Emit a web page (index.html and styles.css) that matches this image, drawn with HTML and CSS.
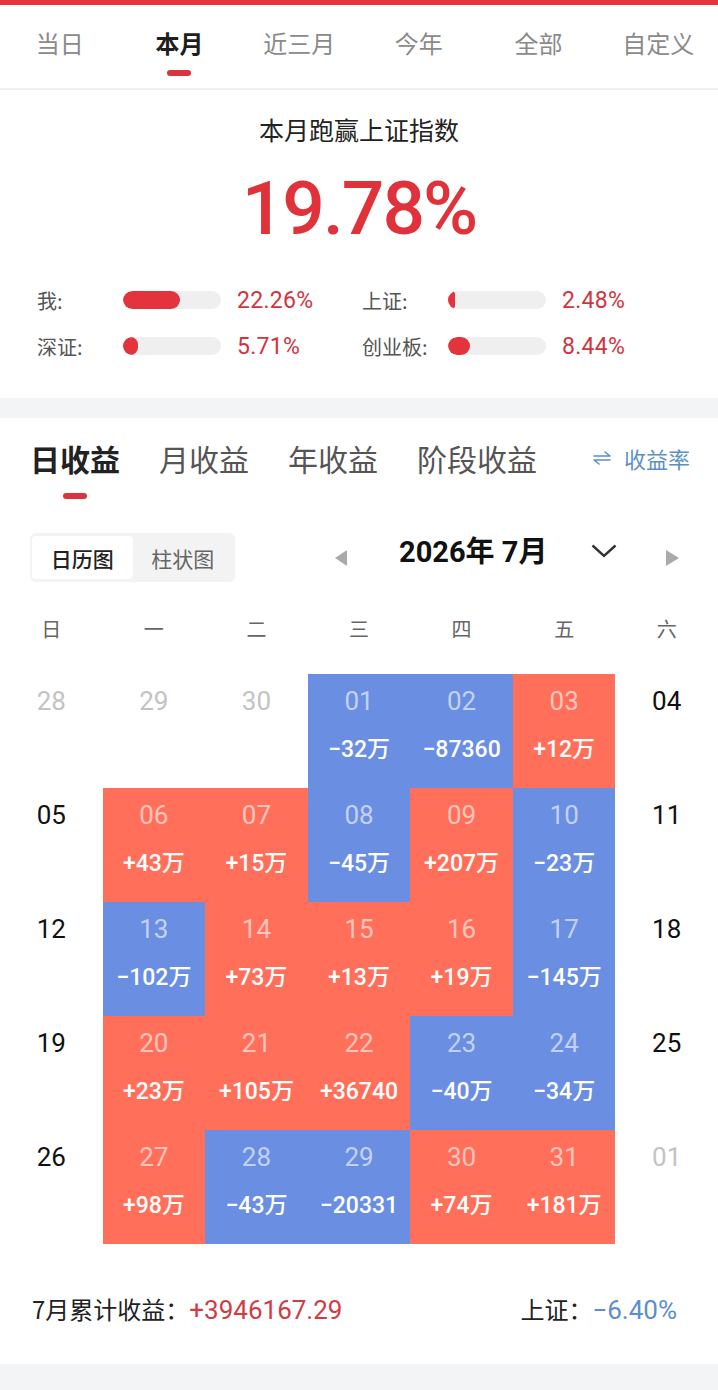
FILE: index.html
```html
<!DOCTYPE html>
<html lang="zh-CN">
<head>
<meta charset="utf-8">
<title>收益</title>
<link rel="stylesheet" href="styles.css">
</head>
<body>
<div class="topbar"></div>
<nav class="period-tabs">
  <div class="ptab">当日</div>
  <div class="ptab active">本月<span class="ind"></span></div>
  <div class="ptab">近三月</div>
  <div class="ptab">今年</div>
  <div class="ptab">全部</div>
  <div class="ptab">自定义</div>
</nav>
<section class="summary">
  <div class="sum-title">本月跑赢上证指数</div>
  <div class="sum-value">19.78%</div>
  <div class="stats">
    <div class="stat"><span class="stat-label">我:</span><span class="bar"><span class="fill" style="width:57px"></span></span><span class="stat-val">22.26%</span></div>
    <div class="stat"><span class="stat-label">上证:</span><span class="bar"><span class="fill" style="width:7px"></span></span><span class="stat-val">2.48%</span></div>
    <div class="stat"><span class="stat-label">深证:</span><span class="bar"><span class="fill" style="width:15px"></span></span><span class="stat-val">5.71%</span></div>
    <div class="stat"><span class="stat-label">创业板:</span><span class="bar"><span class="fill" style="width:22px"></span></span><span class="stat-val">8.44%</span></div>
  </div>
</section>
<div class="gap"></div>
<section class="profit">
  <div class="ptabs2">
    <div class="t2 active">日收益<span class="ind"></span></div>
    <div class="t2">月收益</div>
    <div class="t2">年收益</div>
    <div class="t2">阶段收益</div>
    <div class="rate"><svg class="swap" width="18" height="14" viewBox="0 0 18 14"><path d="M1 5 H17 L12 1" fill="none" stroke="currentColor" stroke-width="1.6" stroke-linejoin="round" stroke-linecap="round"/><path d="M17 9 H1 L6 13" fill="none" stroke="currentColor" stroke-width="1.6" stroke-linejoin="round" stroke-linecap="round"/></svg><span>收益率</span></div>
  </div>
  <div class="toolbar">
    <div class="toggle">
      <div class="tg active">日历图</div>
      <div class="tg">柱状图</div>
    </div>
    <div class="monthnav">
      <span class="tri left"></span>
      <span class="month">2026年 7月</span>
      <svg class="chev" width="26" height="14" viewBox="0 0 26 14"><path d="M1.5 1.5 L13 12 L24.5 1.5" fill="none" stroke="#333" stroke-width="2.4"/></svg>
      <span class="tri right"></span>
    </div>
  </div>
  <div class="weekdays">
    <span>日</span><span>一</span><span>二</span><span>三</span><span>四</span><span>五</span><span>六</span>
  </div>
  <div class="cal">
    <div class="cell out"><span class="d">28</span></div>
    <div class="cell out"><span class="d">29</span></div>
    <div class="cell out"><span class="d">30</span></div>
    <div class="cell loss"><span class="d">01</span><span class="v">−32万</span></div>
    <div class="cell loss"><span class="d">02</span><span class="v">−87360</span></div>
    <div class="cell gain"><span class="d">03</span><span class="v">+12万</span></div>
    <div class="cell we"><span class="d">04</span></div>

    <div class="cell we"><span class="d">05</span></div>
    <div class="cell gain"><span class="d">06</span><span class="v">+43万</span></div>
    <div class="cell gain"><span class="d">07</span><span class="v">+15万</span></div>
    <div class="cell loss"><span class="d">08</span><span class="v">−45万</span></div>
    <div class="cell gain"><span class="d">09</span><span class="v">+207万</span></div>
    <div class="cell loss"><span class="d">10</span><span class="v">−23万</span></div>
    <div class="cell we"><span class="d">11</span></div>

    <div class="cell we"><span class="d">12</span></div>
    <div class="cell loss"><span class="d">13</span><span class="v">−102万</span></div>
    <div class="cell gain"><span class="d">14</span><span class="v">+73万</span></div>
    <div class="cell gain"><span class="d">15</span><span class="v">+13万</span></div>
    <div class="cell gain"><span class="d">16</span><span class="v">+19万</span></div>
    <div class="cell loss"><span class="d">17</span><span class="v">−145万</span></div>
    <div class="cell we"><span class="d">18</span></div>

    <div class="cell we"><span class="d">19</span></div>
    <div class="cell gain"><span class="d">20</span><span class="v">+23万</span></div>
    <div class="cell gain"><span class="d">21</span><span class="v">+105万</span></div>
    <div class="cell gain"><span class="d">22</span><span class="v">+36740</span></div>
    <div class="cell loss"><span class="d">23</span><span class="v">−40万</span></div>
    <div class="cell loss"><span class="d">24</span><span class="v">−34万</span></div>
    <div class="cell we"><span class="d">25</span></div>

    <div class="cell we"><span class="d">26</span></div>
    <div class="cell gain"><span class="d">27</span><span class="v">+98万</span></div>
    <div class="cell loss"><span class="d">28</span><span class="v">−43万</span></div>
    <div class="cell loss"><span class="d">29</span><span class="v">−20331</span></div>
    <div class="cell gain"><span class="d">30</span><span class="v">+74万</span></div>
    <div class="cell gain"><span class="d">31</span><span class="v">+181万</span></div>
    <div class="cell out"><span class="d">01</span></div>
  </div>
  <div class="footer">
    <div class="f-left"><span class="f-label">7月累计收益：</span><span class="f-red">+3946167.29</span></div>
    <div class="f-right"><span class="f-label">上证：</span><span class="f-blue">−6.40%</span></div>
  </div>
</section>
<div class="gap bottom"></div>
</body>
</html>
```
FILE: styles.css
```css
* { box-sizing: border-box; }
html, body { margin: 0; padding: 0; background: #fff; }
body {
  width: 718px;
  font-family: "Noto Sans CJK SC", "Noto Sans", sans-serif;
  color: #222;
}
.sum-value, .stat-val, .month, .cell, .f-red, .f-blue {
  font-family: Roboto, "Noto Sans CJK SC", sans-serif;
}

.topbar { height: 5px; background: #e4363f; }

.period-tabs {
  display: grid;
  grid-template-columns: repeat(6, 1fr);
  height: 85px;
  border-bottom: 2px solid #f0f0f0;
}
.ptab {
  display: flex;
  flex-direction: column;
  align-items: center;
  padding-top: 21px;
  font-size: 24px;
  line-height: 34px;
  color: #8a8a8a;
}
.ptab.active { color: #1e1e1e; font-weight: 700; }
.ind {
  display: block;
  width: 24px;
  height: 6px;
  border-radius: 3px;
  background: #d9343c;
}
.ptab .ind { margin-top: 10px; }

.summary {
  padding: 22px 0 37px;
  text-align: center;
}
.sum-title { font-size: 25px; line-height: 34px; color: #222; }
.sum-value {
  margin-top: 17px;
  font-size: 75px;
  line-height: 90px;
  font-weight: 500;
  color: #e0323b;
  letter-spacing: -2px;
}
.stats {
  margin-top: 32px;
  display: grid;
  grid-template-columns: 325px 1fr;
  row-gap: 16px;
  padding-left: 37px;
  text-align: left;
}
.stat { display: flex; align-items: center; height: 30px; }
.stat-label { width: 86px; font-size: 20px; color: #555; }
.bar {
  width: 98px;
  height: 18px;
  border-radius: 9px;
  background: #efefef;
  overflow: hidden;
  margin-right: 16px;
}
.fill { display: block; height: 18px; border-radius: 9px; background: #e3333c; }
.stat-val { font-size: 23px; color: #d1343f; letter-spacing: 0.3px; }

.gap { height: 20px; background: #f3f4f6; }
.gap.bottom { height: 30px; }

.profit { padding-top: 20px; }
.ptabs2 {
  display: flex;
  align-items: flex-start;
  gap: 39px;
  padding: 0 28px 0 30px;
}
.t2 {
  display: flex;
  flex-direction: column;
  align-items: center;
  font-size: 30px;
  line-height: 40px;
  color: #555;
}
.t2.active { color: #222; font-weight: 700; }
.t2 .ind { margin-top: 15px; }
.rate {
  margin-left: auto;
  display: flex;
  align-items: center;
  height: 40px;
  font-size: 22px;
  color: #5b8fc9;
}
.swap { margin-right: 13px; }

.toolbar {
  margin-top: 34px;
  height: 49px;
  display: flex;
  align-items: center;
  padding-left: 30px;
}
.toggle {
  display: flex;
  width: 205px;
  height: 49px;
  padding: 3px 2px;
  border-radius: 6px;
  background: #f3f3f3;
}
.tg {
  width: 101px;
  display: flex;
  align-items: center;
  justify-content: center;
  font-size: 21px;
  color: #666;
}
.tg.active { background: #fff; border-radius: 4px; color: #222; font-weight: 500; }

.monthnav { display: flex; align-items: center; margin-left: 100px; }
.tri { width: 0; height: 0; border-top: 8px solid transparent; border-bottom: 8px solid transparent; }
.tri.left { border-right: 12px solid #aaa; }
.tri.right { border-left: 13px solid #aaa; margin-left: 49px; }
.month {
  width: 152px;
  margin-left: 52px;
  margin-bottom: 12px;
  font-size: 29px;
  line-height: 32px;
  font-weight: 700;
  color: #111;
  white-space: nowrap;
}
.chev { margin-left: 40px; margin-bottom: 14px; }

.weekdays {
  margin-top: 32px;
  display: grid;
  grid-template-columns: repeat(7, 1fr);
  text-align: center;
  font-size: 20px;
  line-height: 30px;
  color: #666;
}

.cal {
  margin-top: 30px;
  display: grid;
  grid-template-columns: repeat(7, 1fr);
  grid-auto-rows: 114px;
}
.cell {
  display: flex;
  flex-direction: column;
  align-items: center;
  padding-top: 12px;
}
.cell .d { font-size: 26px; line-height: 30px; }
.cell .v {
  margin-top: 19px;
  font-size: 23px;
  line-height: 30px;
  font-weight: 500;
  color: #fff;
}
.cell.out .d { color: #c3c3c3; }
.cell.we .d { color: #111; }
.cell.gain { background: #ff6f5a; }
.cell.loss { background: #6a8ee1; }
.cell.gain .d, .cell.loss .d { color: rgba(255,255,255,0.62); }

.footer {
  margin-top: 47px;
  padding: 0 41px 34px 32px;
  display: flex;
  justify-content: space-between;
  align-items: center;
  line-height: 36px;
}
.f-label { font-size: 24px; color: #222; }
.f-red { font-size: 26px; color: #d23a44; }
.f-blue { font-size: 26px; color: #5b8ecf; }
```
